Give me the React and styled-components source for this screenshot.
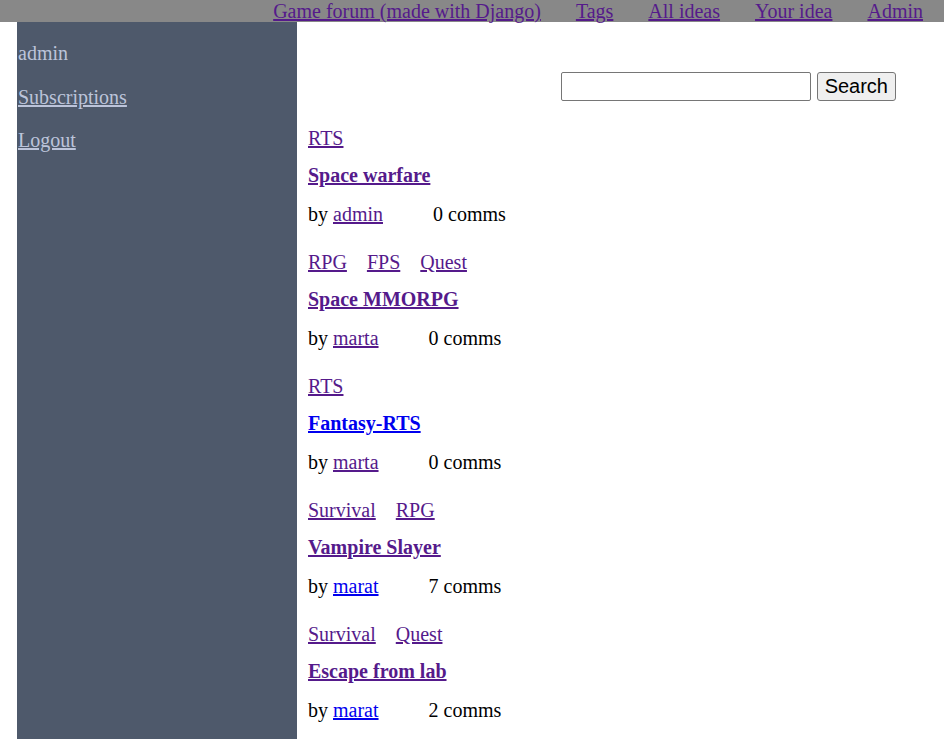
import styled, { createGlobalStyle } from 'styled-components'

const GlobalStyle = createGlobalStyle`
  html, body {
    margin: 0;
    padding: 0;
    background: #fff;
    font-family: "Liberation Serif", "Times New Roman", serif;
    font-size: 20px;
  }
`

const VISITED = '#551a8b'
const FRESH = '#0000ee'

const TopBar = styled.nav`
  display: flex;
  justify-content: flex-end;
  align-items: center;
  gap: 35px;
  height: 22px;
  padding-right: 21px;
  background: #888888;
  line-height: 22px;
  a {
    color: ${VISITED};
  }
`

const Layout = styled.div`
  display: flex;
  align-items: stretch;
  padding-left: 17px;
  min-height: 717px;
`

const Sidebar = styled.aside`
  display: flex;
  flex-direction: column;
  gap: 20.5px;
  width: 279px;
  flex-shrink: 0;
  padding: 20px 0 0 1px;
  background: #4e596b;
  color: #bcc4da;
  line-height: 23px;
  a {
    color: #bcc4da;
  }
`

const Main = styled.main`
  flex: 1;
  display: flex;
  flex-direction: column;
  padding: 50px 48px 20px 11px;
`

const SearchForm = styled.form`
  display: flex;
  justify-content: flex-end;
  gap: 6px;
  margin-bottom: 26px;
`

const SearchInput = styled.input`
  box-sizing: border-box;
  width: 250px;
  height: 29px;
  border: 1px solid #767676;
  border-radius: 2px;
  padding: 1px 2px;
  font-size: 20px;
`

const SearchButton = styled.button`
  box-sizing: border-box;
  height: 29px;
  padding: 1px 7px;
  border: 1px solid #767676;
  border-radius: 3px;
  background: #efefef;
  color: #000;
  font-family: "Liberation Sans", Arial, sans-serif;
  font-size: 20px;
  line-height: 25px;
`

const Ideas = styled.div`
  display: flex;
  flex-direction: column;
  gap: 25px;
`

const Idea = styled.article`
  display: flex;
  flex-direction: column;
  line-height: 23px;
`

const Tags = styled.div`
  display: flex;
  gap: 20px;
  margin-bottom: 14px;
  a {
    color: ${VISITED};
  }
`

const Title = styled.a`
  align-self: flex-start;
  font-weight: bold;
  color: ${(p) => (p.$visited ? VISITED : FRESH)};
  margin-bottom: 16px;
`

const Meta = styled.div`
  color: #000;
`

const Author = styled.a`
  color: ${(p) => (p.$visited ? VISITED : FRESH)};
`

const Comms = styled.span`
  margin-left: 50px;
`

const ideas = [
  { tags: ['RTS'], title: 'Space warfare', seen: true, author: 'admin', authorSeen: true, comms: 0 },
  { tags: ['RPG', 'FPS', 'Quest'], title: 'Space MMORPG', seen: true, author: 'marta', authorSeen: true, comms: 0 },
  { tags: ['RTS'], title: 'Fantasy-RTS', seen: false, author: 'marta', authorSeen: true, comms: 0 },
  { tags: ['Survival', 'RPG'], title: 'Vampire Slayer', seen: true, author: 'marat', authorSeen: false, comms: 7 },
  { tags: ['Survival', 'Quest'], title: 'Escape from lab', seen: true, author: 'marat', authorSeen: false, comms: 2 },
]

const App = () => {
  return (
    <>
      <GlobalStyle />
      <TopBar>
        <a href="#">Game forum (made with Django)</a>
        <a href="#">Tags</a>
        <a href="#">All ideas</a>
        <a href="#">Your idea</a>
        <a href="#">Admin</a>
      </TopBar>
      <Layout>
        <Sidebar>
          <div>admin</div>
          <a href="#">Subscriptions</a>
          <a href="#">Logout</a>
        </Sidebar>
        <Main>
          <SearchForm onSubmit={(e) => e.preventDefault()}>
            <SearchInput type="text" />
            <SearchButton type="submit">Search</SearchButton>
          </SearchForm>
          <Ideas>
            {ideas.map((idea) => (
              <Idea key={idea.title}>
                <Tags>
                  {idea.tags.map((t) => (
                    <a href="#" key={t}>
                      {t}
                    </a>
                  ))}
                </Tags>
                <Title href="#" $visited={idea.seen}>
                  {idea.title}
                </Title>
                <Meta>
                  by <Author href="#" $visited={idea.authorSeen}>{idea.author}</Author>
                  <Comms>{idea.comms} comms</Comms>
                </Meta>
              </Idea>
            ))}
          </Ideas>
        </Main>
      </Layout>
    </>
  )
}

export default App
